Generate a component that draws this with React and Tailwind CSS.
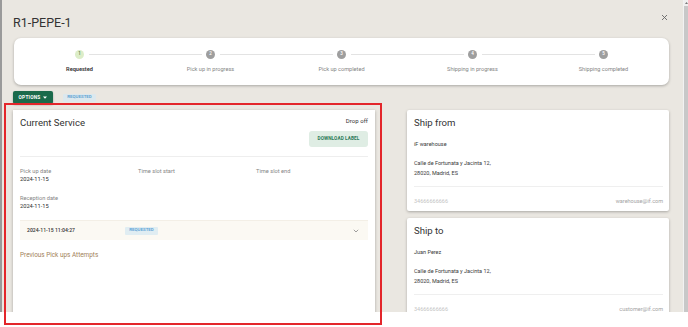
import React from 'react';

const steps = ['Requested', 'Pick up in progress', 'Pick up completed', 'Shipping in progress', 'Shipping completed'];

function Stepper() {
  return (
    <div className="ml-[1px] mt-[8px] grid h-[47px] grid-cols-5 rounded-[7px] bg-white pt-[12px] shadow-[0_1px_3px_rgba(0,0,0,0.28)]">
      {steps.map((s, i) => (
        <div key={s} className="flex flex-col items-center">
          <div className="flex w-full items-center">
            <div className={i === 0 ? 'mr-[4.5px] h-px flex-1' : 'mr-[4.5px] h-px flex-1 bg-[#e3e3e3]'} />
            {i === 0 ? (
              <div className="flex h-[9px] w-[9px] items-center justify-center rounded-full bg-[#dcedc8] text-[4.5px] font-medium text-[#58794a]">1</div>
            ) : (
              <div className="flex h-[9px] w-[9px] items-center justify-center rounded-full bg-[#9e9e9e] text-[4.5px] font-medium text-white">{i + 1}</div>
            )}
            <div className={i === 4 ? 'ml-[4.5px] h-px flex-1' : 'ml-[4.5px] h-px flex-1 bg-[#e3e3e3]'} />
          </div>
          <p className={i === 0 ? 'mt-[6px] text-[5.6px] leading-[8px] font-semibold text-[#333]' : 'mt-[6px] text-[5.6px] leading-[8px] text-[#858585]'}>{s}</p>
        </div>
      ))}
    </div>
  );
}

function Field({ label, value }) {
  return (
    <div>
      <p className="text-[5.7px] leading-[8px] text-[#858585]">{label}</p>
      {value && <p className="text-[5.7px] leading-[8px] text-[#2e2e2e]">{value}</p>}
    </div>
  );
}

function AddressCard({ title, name, email }) {
  return (
    <div className="rounded-[2px] bg-white pl-[7px] pr-[6px] pt-[7px] pb-[6px] shadow-[0_1px_3px_rgba(0,0,0,0.28)]">
      <h2 className="text-[9.6px] leading-[12px] text-[#333]">{title}</h2>
      <p className="mt-[11px] text-[5.5px] leading-[8px] text-[#3a3a3a]">{name}</p>
      <div className="mt-[10px] text-[5.5px] leading-[10px] text-[#3a3a3a]">
        <p>Calle de Fortunata y Jacinta 12,</p>
        <p>28020, Madrid, ES</p>
      </div>
      <div className="mt-[8px] border-t border-[#efefef]" />
      <div className="mt-[10px] flex justify-between text-[5.5px] leading-[8px]">
        <span className="text-[#c4c4c4]">34666666666</span>
        <span className="text-[#a3a3a3]">{email}</span>
      </div>
    </div>
  );
}

export default function App() {
  return (
    <div className="relative h-[327px] w-[688px] overflow-hidden bg-white font-['Roboto',sans-serif] [font-variant-ligatures:none]">
      <div className="flex h-[312px]">
        <div className="w-[2px] bg-[#9a9a9a]" />
        <div className="flex-1 overflow-hidden bg-[#eae7e1] pl-[11px] pr-[14px]">
          <div className="flex items-start justify-between pt-[15px]">
            <h1 className="text-[12.5px] leading-[15px] text-[#333]">R1-PEPE-1</h1>
            <svg width="7" height="7" viewBox="0 0 7 7" className="mr-[1px] mt-[-1px]">
              <path d="M1 1L6 6M6 1L1 6" stroke="#666" strokeWidth="0.9" />
            </svg>
          </div>

          <Stepper />

          <div className="mt-[6px] flex items-center gap-[10px]">
            <button className="flex h-[13px] w-[40px] items-center justify-center gap-[3px] rounded-[2px] bg-[#1a6a4b] text-[4.8px] font-bold tracking-[0.2px] text-white shadow-[0_1px_2px_rgba(0,0,0,0.3)]">
              OPTIONS
              <svg width="4" height="3" viewBox="0 0 4 3"><path d="M0 0.5h4L2 2.7z" fill="#fff" /></svg>
            </button>
            <span className="flex h-[8px] w-[33px] items-center justify-center rounded-[1px] bg-[#dce8ee] text-[4.4px] font-semibold text-[#5ea2d2]">REQUESTED</span>
          </div>

          <div className="mt-[6px] flex items-start gap-[32px]">
            {/* Current service */}
            <div className="h-[240px] w-[362px] shrink-0 bg-white px-[7px] pt-[7px] shadow-[0_1px_3px_rgba(0,0,0,0.28)]">
              <div className="flex items-start justify-between">
                <h2 className="text-[9.6px] leading-[12px] text-[#333]">Current Service</h2>
                <div className="flex flex-col items-end">
                  <p className="text-[6px] leading-[8px] tracking-[0.05px] text-[#333]">Drop off</p>
                  <button className="mt-[6px] flex h-[16px] w-[59px] items-center justify-center rounded-[3px] bg-[#dfede4] text-[4.7px] font-bold tracking-[0.1px] text-[#2b7a57]">DOWNLOAD LABEL</button>
                </div>
              </div>
              <div className="mt-[9px] border-t border-[#eeeeee]" />
              <div className="mt-[10px] grid grid-cols-[118px_118px_1fr]">
                <Field label="Pick up date" value="2024-11-15" />
                <Field label="Time slot start" />
                <Field label="Time slot end" />
              </div>
              <div className="mt-[11px]">
                <Field label="Reception date" value="2024-11-15" />
              </div>
              <div className="mt-[10px] flex h-[20px] items-center border-t border-[#f3efe6] bg-[#fbf9f3] pl-[7px] pr-[9px]">
                <span className="w-[98px] text-[5.1px] font-medium text-[#333]">2024-11-15 11:04:27</span>
                <span className="flex h-[8px] w-[33px] items-center justify-center rounded-[1px] bg-[#e0edf2] text-[4.4px] font-semibold text-[#5ea3d6]">REQUESTED</span>
                <svg width="6" height="4" viewBox="0 0 6 4" className="ml-auto">
                  <path d="M0.8 0.8L3 3L5.2 0.8" fill="none" stroke="#777" strokeWidth="0.7" />
                </svg>
              </div>
              <p className="mt-[10.5px] text-[6.4px] leading-[9px] text-[#9f8159]">Previous Pick ups Attempts</p>
            </div>

            {/* Addresses */}
            <div className="flex w-[262px] flex-col gap-[7px]">
              <AddressCard title="Ship from" name="iF warehouse" email="warehouse@if.com" />
              <AddressCard title="Ship to" name="Juan Perez" email="customer@if.com" />
            </div>
          </div>
        </div>
        <div className="flex w-[5px] flex-col border-l border-[#f2f2f2] bg-[#c8c8c8]">
          <div className="flex h-[6px] items-center justify-center bg-[#efefef]">
            <svg width="3" height="2" viewBox="0 0 3 2"><path d="M0 2L1.5 0L3 2z" fill="#777" /></svg>
          </div>
        </div>
      </div>
      <div className="h-[15px]" />

      {/* highlight overlay */}
      <div className="pointer-events-none absolute left-[4px] top-[103px] h-[222px] w-[378px] border-2 border-[#e3262b]" />
    </div>
  );
}
